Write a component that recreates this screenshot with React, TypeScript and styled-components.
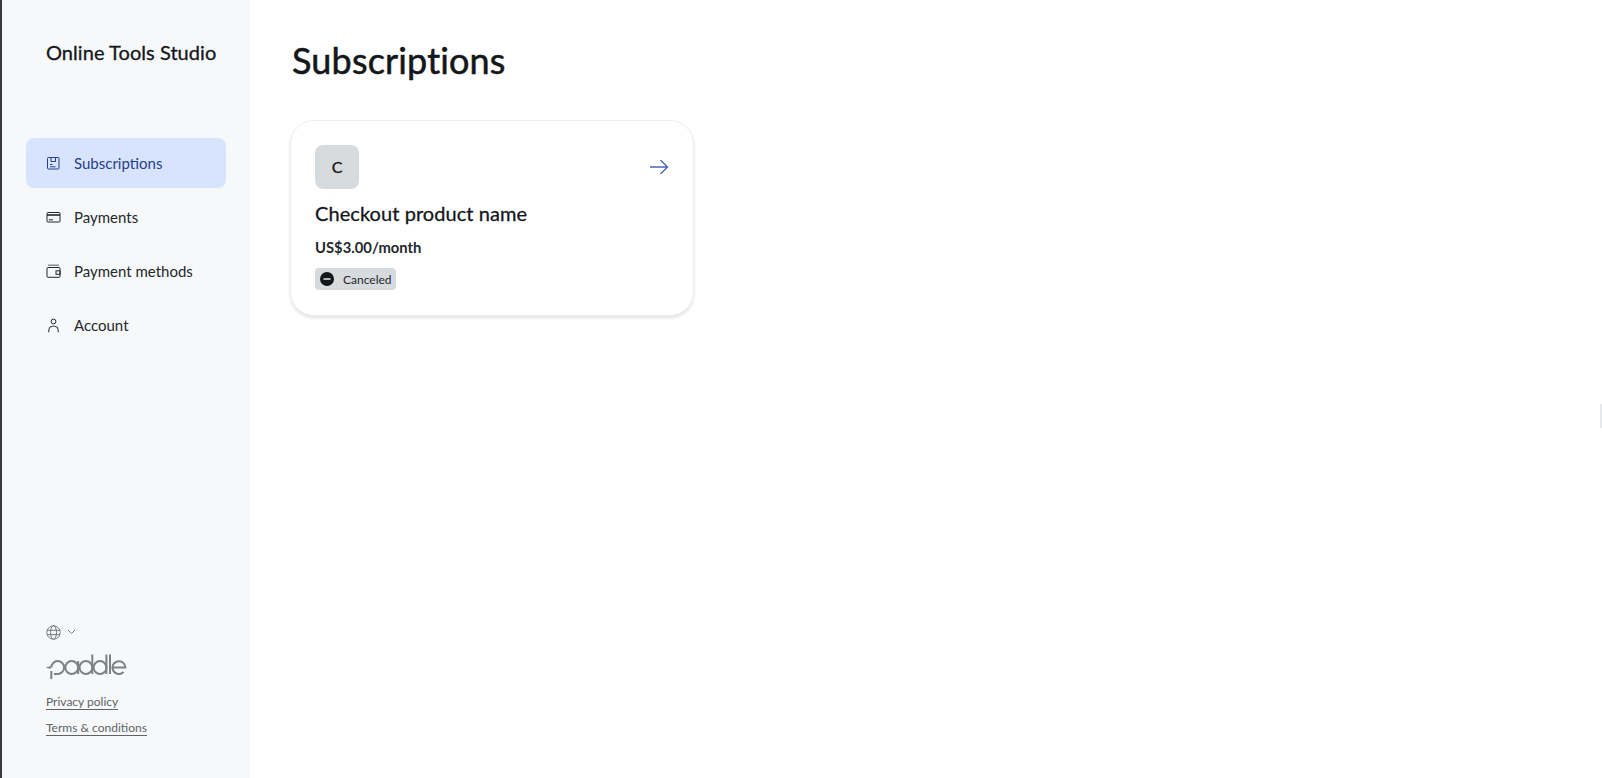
import React from "react";
import styled, { createGlobalStyle } from "styled-components";

const Global = createGlobalStyle`
  html, body { margin: 0; padding: 0; background: #fff; }
  body { font-family: Lato, "Liberation Sans", sans-serif; color: #14171a; overflow: hidden; }
  * { box-sizing: border-box; }
`;

const Page = styled.div`
  display: flex;
  height: 778px;
  border-left: 2px solid #3b3b3e;
  position: relative;
`;

const Sidebar = styled.aside`
  width: 248px;
  flex: none;
  background: #f7f8fa;
  display: flex;
  flex-direction: column;
  padding: 40px 24px 0 24px;
`;

const Brand = styled.div`
  font-size: 20px;
  line-height: 24px;
  font-weight: 400;
  letter-spacing: 0.05px;
  -webkit-text-stroke: 0.3px #14171a;
  padding-left: 20px;
  color: #14171a;
`;

const Nav = styled.nav`
  display: flex;
  flex-direction: column;
  gap: 4px;
  margin-top: 74px;
`;

const NavItem = styled.a<{ $active?: boolean }>`
  height: 50px;
  width: 200px;
  display: flex;
  align-items: center;
  gap: 13px;
  padding-left: 20px;
  border-radius: 8px;
  font-size: 15px;
  background: ${(p) => (p.$active ? "#d8e4fd" : "transparent")};
  color: ${(p) => (p.$active ? "#25408f" : "#24282c")};
  svg { width: 15px; height: 15px; flex: none; }
`;

const Footer = styled.div`
  margin-top: auto;
  padding: 0 0 42px 20px;
  display: flex;
  flex-direction: column;
  align-items: flex-start;
`;

const Locale = styled.div`
  display: flex;
  align-items: center;
  gap: 6px;
  color: #75797d;
  height: 16px;
`;

const Logo = styled.svg`
  width: 82px;
  height: 26px;
  margin-top: 14px;
  display: block;
`;

const FooterLink = styled.a<{ $first?: boolean }>`
  font-size: 12px;
  line-height: 15px;
  color: #5f6368;
  border-bottom: 1px solid #5f6368;
  margin-top: ${(p) => (p.$first ? "14px" : "10px")};
`;

const Main = styled.main`
  flex: 1;
  padding: 36px 40px 0 40px;
`;

const Heading = styled.h1`
  margin: 0 0 0 2px;
  font-size: 36px;
  line-height: 48px;
  font-weight: 400;
  letter-spacing: 0.16px;
  -webkit-text-stroke: 0.55px #14171a;
  color: #14171a;
`;

const Card = styled.article`
  margin-top: 36px;
  width: 404px;
  height: 196px;
  border: 1px solid #eceef0;
  border-radius: 24px;
  background: #fff;
  padding: 24px;
  box-shadow: 0 2px 3px rgba(20, 23, 26, 0.12);
`;

const CardTop = styled.div`
  display: flex;
  align-items: center;
  justify-content: space-between;
`;

const Avatar = styled.div`
  width: 44px;
  height: 44px;
  border-radius: 8px;
  background: #d8dbde;
  display: flex;
  align-items: center;
  justify-content: center;
  font-size: 16px;
  font-weight: 400;
  -webkit-text-stroke: 0.35px #14171a;
  padding-bottom: 1px;
  color: #14171a;
`;

const ProductName = styled.div`
  margin-top: 11px;
  font-size: 20px;
  line-height: 26px;
  font-weight: 400;
  letter-spacing: 0.07px;
  -webkit-text-stroke: 0.3px #14171a;
`;

const Price = styled.div`
  margin-top: 11px;
  font-size: 14.8px;
  line-height: 20px;
  font-weight: 700;
  color: #24282c;
`;

const Badge = styled.div`
  margin-top: 11px;
  display: inline-flex;
  align-items: center;
  gap: 9px;
  height: 22px;
  padding: 0 4px 0 5px;
  border-radius: 4px;
  background: #d8dbde;
  font-size: 12px;
  color: #24282c;
`;

const Tick = styled.div`
  position: absolute;
  right: 0;
  top: 404px;
  width: 2px;
  height: 24px;
  background: #e6e8ea;
`;

export default function App() {
  return (
    <>
      <Global />
      <Page>
        <Sidebar>
          <Brand>Online Tools Studio</Brand>
          <Nav>
            <NavItem $active>
              <svg viewBox="0 0 15 15" fill="none" stroke="currentColor" strokeWidth="1">
                <rect x="1.5" y="1.5" width="11.5" height="11.5" rx="0.8" />
                <path d="M5 1.5V5.5H9.5V1.5M4 8.5H6.5M4 10.8H9.5" />
              </svg>
              Subscriptions
            </NavItem>
            <NavItem>
              <svg viewBox="0 0 15 15" fill="none" stroke="currentColor" strokeWidth="1">
                <rect x="1" y="2.5" width="13" height="9.5" rx="1" />
                <path d="M1 5H14" strokeWidth="1.6" />
                <path d="M2.8 9.8H7" />
              </svg>
              Payments
            </NavItem>
            <NavItem>
              <svg viewBox="0 0 15 15" fill="none" stroke="currentColor" strokeWidth="1">
                <path d="M2 1.2H13" stroke="#75797d" strokeWidth="1.3" />
                <rect x="1" y="3.5" width="13" height="9.8" rx="1" />
                <rect x="10" y="6.8" width="4" height="3.5" />
              </svg>
              Payment methods
            </NavItem>
            <NavItem>
              <svg viewBox="0 0 15 15" fill="none" stroke="currentColor" strokeWidth="1">
                <circle cx="7.5" cy="3.5" r="2.4" />
                <path d="M2.8 14.3V12A3.8 3.8 0 0 1 6.6 8.2H8.4A3.8 3.8 0 0 1 12.2 12V14.3" />
              </svg>
              Account
            </NavItem>
          </Nav>
          <Footer>
            <Locale>
              <svg width="15" height="15" viewBox="0 0 15 15" fill="none" stroke="currentColor" strokeWidth="1">
                <circle cx="7.5" cy="7.5" r="6.7" />
                <ellipse cx="7.5" cy="7.5" rx="3" ry="6.7" />
                <path d="M1 5.3H14M1 9.7H14" />
              </svg>
              <svg width="9" height="6" viewBox="0 0 9 6" fill="none" stroke="currentColor" strokeWidth="1">
                <path d="M1 1L4.5 4.5L8 1" />
              </svg>
            </Locale>
            <Logo viewBox="0 0 82 26" fill="none" stroke="#7d8185" strokeWidth="2">
              <path d="M0.5 13.5H3.5" strokeWidth="1.2" />
              <circle cx="3.8" cy="13.5" r="1.2" fill="#7d8185" stroke="none" />
              <path d="M5.3 17V25" />
              <path d="M5.3 13.5A6.4 6.4 0 1 1 11.7 19.9H8" />
              <circle cx="25.7" cy="13.5" r="6.4" />
              <path d="M32.1 7.1V20" />
              <circle cx="39.9" cy="13.5" r="6.4" />
              <path d="M46.3 0.5V20" />
              <circle cx="54" cy="13.5" r="6.4" />
              <path d="M60.4 0.5V20" />
              <path d="M64 0.5V20" />
              <path d="M66.4 13.5H79.4A6.5 6.4 0 1 0 77.6 18" />
            </Logo>
            <FooterLink $first>Privacy policy</FooterLink>
            <FooterLink>Terms &amp; conditions</FooterLink>
          </Footer>
        </Sidebar>
        <Main>
          <Heading>Subscriptions</Heading>
          <Card>
            <CardTop>
              <Avatar>C</Avatar>
              <svg width="19" height="14" viewBox="0 0 19 14" fill="none" stroke="#4a66b8" strokeWidth="1.4">
                <path d="M0 7H17.5M10.5 0L17.5 7L10.5 14" />
              </svg>
            </CardTop>
            <ProductName>Checkout product name</ProductName>
            <Price>US$3.00/month</Price>
            <Badge>
              <svg width="14" height="14" viewBox="0 0 14 14">
                <circle cx="7" cy="7" r="7" fill="#14171a" />
                <path d="M3.5 7H10.5" stroke="#d8dbde" strokeWidth="1.6" />
              </svg>
              Canceled
            </Badge>
          </Card>
        </Main>
        <Tick />
      </Page>
    </>
  );
}
